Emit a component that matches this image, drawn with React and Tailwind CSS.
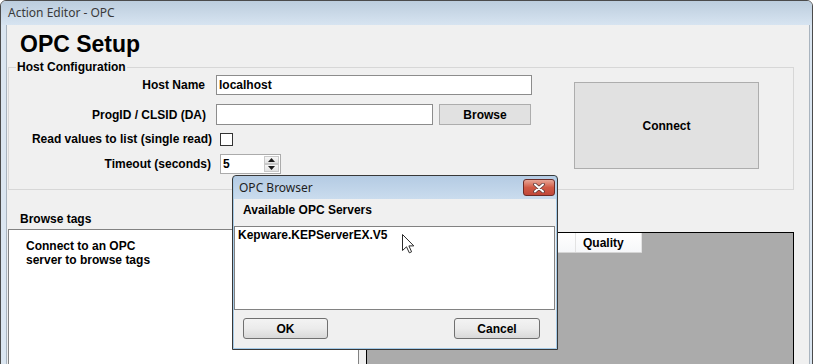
import React from 'react';

const Row = ({ label, labelW, gap, h, children, className = '' }) => (
  <div className={`flex items-center ${className}`} style={{ height: h }}>
    <div className="text-right whitespace-nowrap leading-[14px]" style={{ width: labelW }}>{label}</div>
    <div className="flex items-center" style={{ marginLeft: gap }}>{children}</div>
  </div>
);

const SpinBtn = ({ up }) => (
  <div className="w-[15px] h-[8px] flex items-center justify-center border border-[#c9c9c9] bg-gradient-to-b from-[#f7f7f7] to-[#e3e3e3]">
    <svg width="7" height="4" viewBox="0 0 7 4">
      <path d={up ? 'M0 4 L3.5 0 L7 4 Z' : 'M0 0 L3.5 4 L7 0 Z'} fill="#1c1c1c" />
    </svg>
  </div>
);

export default function App() {
  return (
    <div className="relative w-[814px] h-[364px] overflow-hidden bg-white font-['Liberation_Sans',Arial,sans-serif] text-[12px] font-bold text-black">
      {/* main window */}
      <div className="w-[813px] h-[420px] flex flex-col rounded-t-[6px] border border-[#4b4b4b] bg-[#dbe6f1]">
        <div className="h-[24px] shrink-0 flex items-center pl-[7px] rounded-t-[5px] bg-gradient-to-b from-[#bccddd] to-[#d7e4f1] font-['Noto_Sans',sans-serif] font-normal text-[12px] text-[#3a3a3a]">
          Action Editor - OPC
        </div>
        <div className="flex-1 ml-[5px] mr-[2px] border-l border-r border-[#a9b4bf] bg-[#f0f0f0]">
          <div className="pt-[6px] pl-[13px] text-[23px] leading-[26px]">OPC Setup</div>

          {/* host configuration group */}
          <div className="relative mt-[10px] ml-[1px] w-[786px] h-[123px] border border-[#d7d7d7] flex">
            <span className="absolute left-[7px] top-[-8px] px-[1px] bg-[#f0f0f0] leading-[14px]">Host Configuration</span>
            <div className="pt-[7px] flex flex-col">
              <Row label="Host Name" labelW={196} gap={11} h={20}>
                <div className="w-[316px] h-[20px] border border-[#8c8c8c] bg-white pl-[2px] leading-[18px]">localhost</div>
              </Row>
              <Row label="ProgID / CLSID (DA)" labelW={197} gap={10} h={21} className="mt-[9px]">
                <div className="w-[217px] h-[21px] border border-[#8c8c8c] bg-white" />
                <div className="ml-[6px] w-[92px] h-[21px] border border-[#adadad] bg-[#e1e1e1] flex items-center justify-center">Browse</div>
              </Row>
              <Row label="Read values to list (single read)" labelW={203} gap={8} h={14} className="mt-[7px]">
                <div className="w-[13px] h-[13px] border border-[#333] bg-white" />
              </Row>
              <Row label="Timeout (seconds)" labelW={202} gap={9} h={20} className="mt-[8px]">
                <div className="w-[61px] h-[20px] border border-[#ababab] bg-white flex items-center">
                  <span className="pl-[2px] flex-1 leading-[14px]">5</span>
                  <div className="mr-[1px] flex flex-col">
                    <SpinBtn up />
                    <SpinBtn />
                  </div>
                </div>
              </Row>
            </div>
            <div className="ml-auto mr-[34px] mt-[14px] w-[185px] h-[87px] border border-[#adadad] bg-[#e1e1e1] flex items-center justify-center">
              Connect
            </div>
          </div>

          {/* browse area */}
          <div className="mt-[22px] flex items-start">
            <div className="ml-[1px] w-[351px] flex flex-col">
              <div className="pl-[12px] leading-[14px]">Browse tags</div>
              <div className="mt-[3px] h-[200px] border border-[#828282] bg-white pt-[9px] pl-[17px] leading-[14px]">
                Connect to an OPC<br />server to browse tags
              </div>
            </div>
            <div className="ml-[7px] mt-[20px] w-[428px] h-[200px] border border-black bg-[#ababab]">
              <div className="w-[275px] h-[20px] flex bg-gradient-to-b from-white to-[#f6f7f9] border-b border-[#d5d5d5]">
                <div className="w-[209px] border-r border-[#e3e3e3]" />
                <div className="w-[66px] pl-[7px] flex items-center border-r border-[#e3e3e3]">Quality</div>
              </div>
            </div>
          </div>
        </div>
      </div>

      {/* OPC Browser dialog */}
      <div className="absolute left-[232px] top-[175px] w-[326px] h-[175px] flex flex-col rounded-t-[4px] border border-[#383838] bg-[#a6cbe8] px-[1px] pb-[1px]">
        <div className="h-[23px] shrink-0 flex items-center rounded-t-[3px] bg-gradient-to-b from-[#b4cbe3] to-[#cadcee]">
          <span className="pl-[5px] font-['Noto_Sans',sans-serif] font-normal text-[12px] text-[#1e1e1e]">OPC Browser</span>
          <div className="ml-auto mr-[1px] self-start mt-[3px] w-[32px] h-[17px] rounded-[3px] border border-[#6b2b26] bg-gradient-to-b from-[#e7a596] via-[#d05a45] to-[#c0473a] flex items-center justify-center">
            <svg width="12" height="10" viewBox="0 0 12 10">
              <path d="M2 1.5 L10 8.5 M10 1.5 L2 8.5" stroke="#5a3a3a" strokeWidth="3.6" strokeLinecap="round" />
              <path d="M2 1.5 L10 8.5 M10 1.5 L2 8.5" stroke="#ffffff" strokeWidth="2" strokeLinecap="round" />
            </svg>
          </div>
        </div>
        <div className="flex-1 bg-[#f0f0f0] flex flex-col">
          <div className="pt-[4px] pl-[9px] leading-[14px]">Available OPC Servers</div>
          <div className="mt-[9px] w-[321px] h-[84px] border border-[#828282] bg-white pt-[1px] pl-[3px] leading-[14px]">
            Kepware.KEPServerEX.V5
          </div>
          <div className="mt-[8px] flex justify-between pl-[9px] pr-[16px]">
            <div className="w-[85px] h-[21px] rounded-[3px] border border-[#707070] bg-gradient-to-b from-[#f3f3f3] via-[#ebebeb] to-[#d9d9d9] flex items-center justify-center">OK</div>
            <div className="w-[86px] h-[21px] rounded-[3px] border border-[#707070] bg-gradient-to-b from-[#f3f3f3] via-[#ebebeb] to-[#d9d9d9] flex items-center justify-center">Cancel</div>
          </div>
        </div>
      </div>

      {/* mouse pointer */}
      <svg className="absolute left-[402px] top-[234px]" width="13" height="20" viewBox="0 0 13 20">
        <path d="M0.5 0.5 L0.5 16.5 L4.5 12.8 L7.3 18.8 L9.6 17.8 L6.9 11.9 L11.8 11.9 Z" fill="#ffffff" stroke="#2a2a2a" strokeWidth="1" strokeLinejoin="miter" />
      </svg>
    </div>
  );
}
